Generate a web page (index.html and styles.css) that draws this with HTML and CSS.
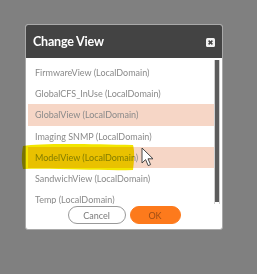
FILE: index.html
```html
<!DOCTYPE html>
<html>
<head>
<meta charset="utf-8">
<link rel="stylesheet" href="styles.css">
</head>
<body>
<div class="dialog">
  <div class="header">
    <span class="title">Change View</span>
    <span class="close">
      <svg width="9" height="9" viewBox="0 0 9 9"><rect x="0" y="0" width="9" height="9" rx="1.5" fill="#f2f2f2"/><path d="M2.6 2.6 L6.4 6.4 M6.4 2.6 L2.6 6.4" stroke="#444" stroke-width="1.5"/></svg>
    </span>
  </div>
  <div class="body">
    <ul class="list">
      <li class="row">FirmwareView (LocalDomain)</li>
      <li class="row">GlobalCFS_InUse (LocalDomain)</li>
      <li class="row sel">GlobalView (LocalDomain)</li>
      <li class="row">Imaging SNMP (LocalDomain)</li>
      <li class="row sel">ModelView (LocalDomain)</li>
      <li class="row">SandwichView (LocalDomain)</li>
      <li class="row">Temp (LocalDomain)</li>
    </ul>
    <div class="scrollbar"><div class="thumb"></div></div>
  </div>
  <div class="footer">
    <button class="btn cancel">Cancel</button>
    <button class="btn ok">OK</button>
  </div>
</div>
<svg class="marker" width="257" height="274" viewBox="0 0 257 274">
  <path d="M23 146 C40 143 90 144 133 145 C135 152 134 162 133 170 C100 171 60 168 23 169 C21 160 22 152 23 146 Z" fill="#f2e600"/>
</svg>
<svg class="cursor" width="14" height="21" viewBox="0 0 14 21">
  <path d="M1 1 L1 16 L4.6 12.6 L7.2 18.6 L9.6 17.6 L7 11.8 L12 11.8 Z" fill="#fff" stroke="#333" stroke-width="0.9" stroke-linejoin="round"/>
</svg>
</body>
</html>
```

FILE: styles.css
```css
html, body {
  margin: 0;
  padding: 0;
}
body {
  background: #808080;
  width: 257px;
  height: 274px;
  overflow: hidden;
  font-family: Lato, "Open Sans", sans-serif;
}
.dialog {
  margin: 24px 0 0 25px;
  width: 198px;
  height: 206px;
  box-sizing: border-box;
  border: 1px solid #a9a9a9;
  border-radius: 3px;
  background: #fff;
  overflow: hidden;
  display: flex;
  flex-direction: column;
}
.header {
  height: 33px;
  background: #434343;
  display: flex;
  align-items: center;
  justify-content: space-between;
  padding: 0 7px 0 7px;
  flex: none;
}
.title {
  color: #fff;
  font-weight: bold;
  font-size: 12.5px;
  letter-spacing: -0.2px;
}
.close {
  display: flex;
  margin-top: 1px;
}
.body {
  height: 146px;
  display: flex;
  flex: none;
  overflow: hidden;
  padding-left: 2px;
}
.list {
  list-style: none;
  margin: 0;
  padding: 4px 0 0 0;
  flex: 1;
}
.row {
  height: 21.2px;
  line-height: 21.2px;
  padding-left: 7px;
  font-size: 9px;
  color: #8a8a8a;
  white-space: nowrap;
}
.row.sel {
  background: #f6d6c6;
}
.scrollbar {
  width: 4px;
  margin: 2px 2px 0 0;
  border-left: 1px solid #d0d0d0;
  border-right: 1px solid #d0d0d0;
  flex: none;
  display: flex;
}
.thumb {
  width: 4px;
  background: #5c5c5c;
  height: 142px;
}
.footer {
  flex: 1;
  display: flex;
  justify-content: center;
  align-items: flex-start;
  gap: 4px;
  padding-top: 2px;
}
.btn {
  height: 18px;
  border-radius: 9px;
  font-family: Lato, "Open Sans", sans-serif;
  font-size: 9px;
  padding: 0;
  box-sizing: border-box;
}
.cancel {
  width: 58px;
  background: #fff;
  border: 1px solid #9a9a9a;
  color: #7a7a7a;
}
.ok {
  width: 51px;
  background: #fd7a1c;
  border: 1px solid #fd7a1c;
  color: #a04e14;
}
.marker {
  position: absolute;
  left: 0;
  top: 0;
  pointer-events: none;
  mix-blend-mode: multiply;
}
.cursor {
  position: absolute;
  left: 141px;
  top: 147px;
}
```
